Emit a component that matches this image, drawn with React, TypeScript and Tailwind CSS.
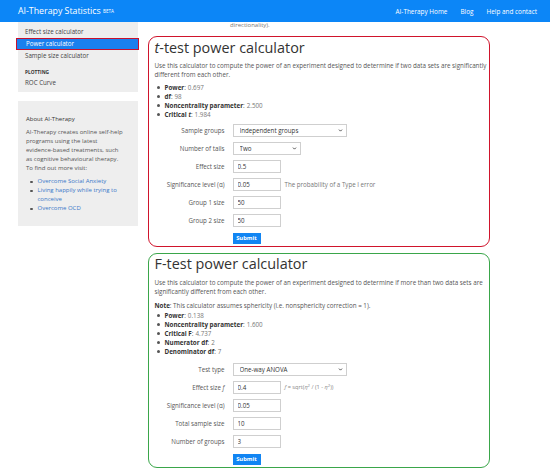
import { ChevronDown } from 'lucide-react'

function Select ({ value, width }: { value: string, width: string }) {
  return (
    <div className={`relative h-[13px] ${width}`}>
      <select defaultValue={value} className="appearance-none w-full h-full border border-[#cfcfcf] bg-white pl-[6px] text-[6.2px] text-[#333] outline-none">
        <option>{value}</option>
      </select>
      <ChevronDown className="absolute right-[4px] top-[4px] w-[5px] h-[5px] text-[#333]" strokeWidth={4} />
    </div>
  )
}

function Input ({ value }: { value: string }) {
  return (
    <input defaultValue={value} className="w-[48px] h-[13px] border border-[#cfcfcf] bg-white px-[4px] text-[6.2px] text-[#333] outline-none" />
  )
}

function Row ({ label, children }: { label: React.ReactNode, children: React.ReactNode }) {
  return (
    <div className="flex items-center h-[13px]">
      <div className="w-[70px] text-right text-[6.2px] text-[#555] whitespace-nowrap">{label}</div>
      <div className="flex items-center ml-[8px]">{children}</div>
    </div>
  )
}

function Stat ({ name, value }: { name: React.ReactNode, value: string }) {
  return (
    <li className="flex items-center">
      <span className="w-[3px] h-[3px] rounded-full bg-[#555] ml-[2px] mr-[5px]" />
      <span className="font-bold text-[#333]">{name}</span>: <span className="text-[#777] ml-[2px]">{value}</span>
    </li>
  )
}

function SubmitButton () {
  return (
    <button className="ml-[78px] h-[11px] w-[28px] bg-[#1185f3] text-white font-bold text-[5.8px] leading-[11px]">Submit</button>
  )
}

function Bullet () {
  return <span className="w-[2.5px] h-[2.5px] rounded-full bg-[#555] ml-[4px] mr-[5px] mt-[3.5px] shrink-0" />
}

export default function App () {
  return (
    <div className="w-[550px] h-[472px] overflow-hidden bg-white font-['Open_Sans',sans-serif] text-[6.25px] leading-[9px] text-[#555]">
      <header className="h-[22px] bg-[#0c86f7] flex items-center justify-between pl-[18px] pr-[13px]">
        <div className="text-white text-[8.8px] leading-[12px] whitespace-nowrap">
          AI-Therapy Statistics <sup className="text-[4.6px] relative -top-[1px]">BETA</sup>
        </div>
        <nav className="flex gap-[13px] text-white text-[6.4px]">
          <a>AI-Therapy Home</a>
          <a>Blog</a>
          <a>Help and contact</a>
        </nav>
      </header>

      <div className="flex pl-[18px] gap-[10px]">
        <aside className="w-[120px] shrink-0">
          <div className="bg-[#eeeeee] pt-[4px] pb-[4px] text-[6.2px] leading-[11.5px] text-[#444]">
            <div className="pl-[7px]">Effect size calculator</div>
            <div className="-ml-[2px] -mr-[1px] pl-[9px] bg-[#1a80ee] text-white border border-[#c8102e] leading-[10.5px]">Power calculator</div>
            <div className="pl-[7px]">Sample size calculator</div>
            <div className="pl-[7px] mt-[6px] text-[4.8px] leading-[8px] font-bold text-[#333]">PLOTTING</div>
            <div className="pl-[7px] mt-[1px]">ROC Curve</div>
          </div>

          <div className="bg-[#eeeeee] mt-[9px] pt-[13.5px] pb-[13px] pl-[8px] pr-[6px] text-[6px] leading-[9px] text-[#555]">
            <div className="text-[#333]">About AI-Therapy</div>
            <p className="mt-[4.5px] whitespace-nowrap">
              AI-Therapy creates online self-help<br />
              programs using the latest<br />
              evidence-based treatments, such<br />
              as cognitive behavioural therapy.<br />
              To find out more visit:
            </p>
            <ul className="mt-[4px] text-[#3a78c9]">
              <li className="flex"><Bullet />Overcome Social Anxiety</li>
              <li className="flex"><Bullet /><span>Living happily while trying to<br />conceive</span></li>
              <li className="flex"><Bullet />Overcome OCD</li>
            </ul>
          </div>
        </aside>

        <main className="w-[342px] shrink-0">
          <div className="pl-[82px] h-[9px] -mt-[1px] text-[6px] text-[#777]">directionality).</div>

          <section className="mt-[6px] border-[1.5px] border-[#d0142c] rounded-[9px] pl-[5.5px] pr-[1.5px] pt-[2px] pb-[2px]">
            <h2 className="text-[14.4px] leading-[17px] text-[#333]"><i>t</i>-test power calculator</h2>
            <p className="mt-[4.5px] leading-[9.4px]">Use this calculator to compute the power of an experiment designed to determine if two data sets are significantly different from each other.</p>
            <ul className="mt-[3.5px]">
              <Stat name="Power" value="0.697" />
              <Stat name="df" value="98" />
              <Stat name="Noncentrality parameter" value="2.500" />
              <Stat name={<>Critical <i>t</i></>} value="1.984" />
            </ul>
            <div className="mt-[5px] flex flex-col gap-[5px]">
              <Row label="Sample groups"><Select value="Independent groups" width="w-[114px]" /></Row>
              <Row label="Number of tails"><Select value="Two" width="w-[68px]" /></Row>
              <Row label="Effect size"><Input value="0.5" /></Row>
              <Row label="Significance level (α)">
                <Input value="0.05" />
                <span className="ml-[4px] text-[6.2px] text-[#777] whitespace-nowrap">The probability of a Type I error</span>
              </Row>
              <Row label="Group 1 size"><Input value="50" /></Row>
              <Row label="Group 2 size"><Input value="50" /></Row>
            </div>
            <div className="mt-[6px]"><SubmitButton /></div>
          </section>

          <section className="mt-[6px] border-[1.5px] border-[#3aa64a] rounded-[9px] pl-[5.5px] pr-[1.5px] pt-[1px] pb-[2px]">
            <h2 className="text-[14.4px] leading-[17px] text-[#333]">F-test power calculator</h2>
            <p className="mt-[6px] leading-[9.4px]">Use this calculator to compute the power of an experiment designed to determine if more than two data sets are significantly different from each other.</p>
            <p className="mt-[4px]"><span className="font-bold text-[#333]">Note</span>: This calculator assumes sphericity (i.e. nonsphericity correction = 1).</p>
            <ul className="mt-[1px]">
              <Stat name="Power" value="0.138" />
              <Stat name="Noncentrality parameter" value="1.600" />
              <Stat name="Critical F" value="4.737" />
              <Stat name="Numerator df" value="2" />
              <Stat name="Denominator df" value="7" />
            </ul>
            <div className="mt-[7px] flex flex-col gap-[5px]">
              <Row label="Test type"><Select value="One-way ANOVA" width="w-[114px]" /></Row>
              <Row label={<>Effect size <i>f</i></>}>
                <Input value="0.4" />
                <span className="ml-[4px] text-[5.6px] text-[#888] whitespace-nowrap"><i>f</i> = sqrt(<i>η</i><sup>2</sup> / (1 - <i>η</i><sup>2</sup>))</span>
              </Row>
              <Row label="Significance level (α)"><Input value="0.05" /></Row>
              <Row label="Total sample size"><Input value="10" /></Row>
              <Row label="Number of groups"><Input value="3" /></Row>
            </div>
            <div className="mt-[6px]"><SubmitButton /></div>
          </section>
        </main>
      </div>
    </div>
  )
}
